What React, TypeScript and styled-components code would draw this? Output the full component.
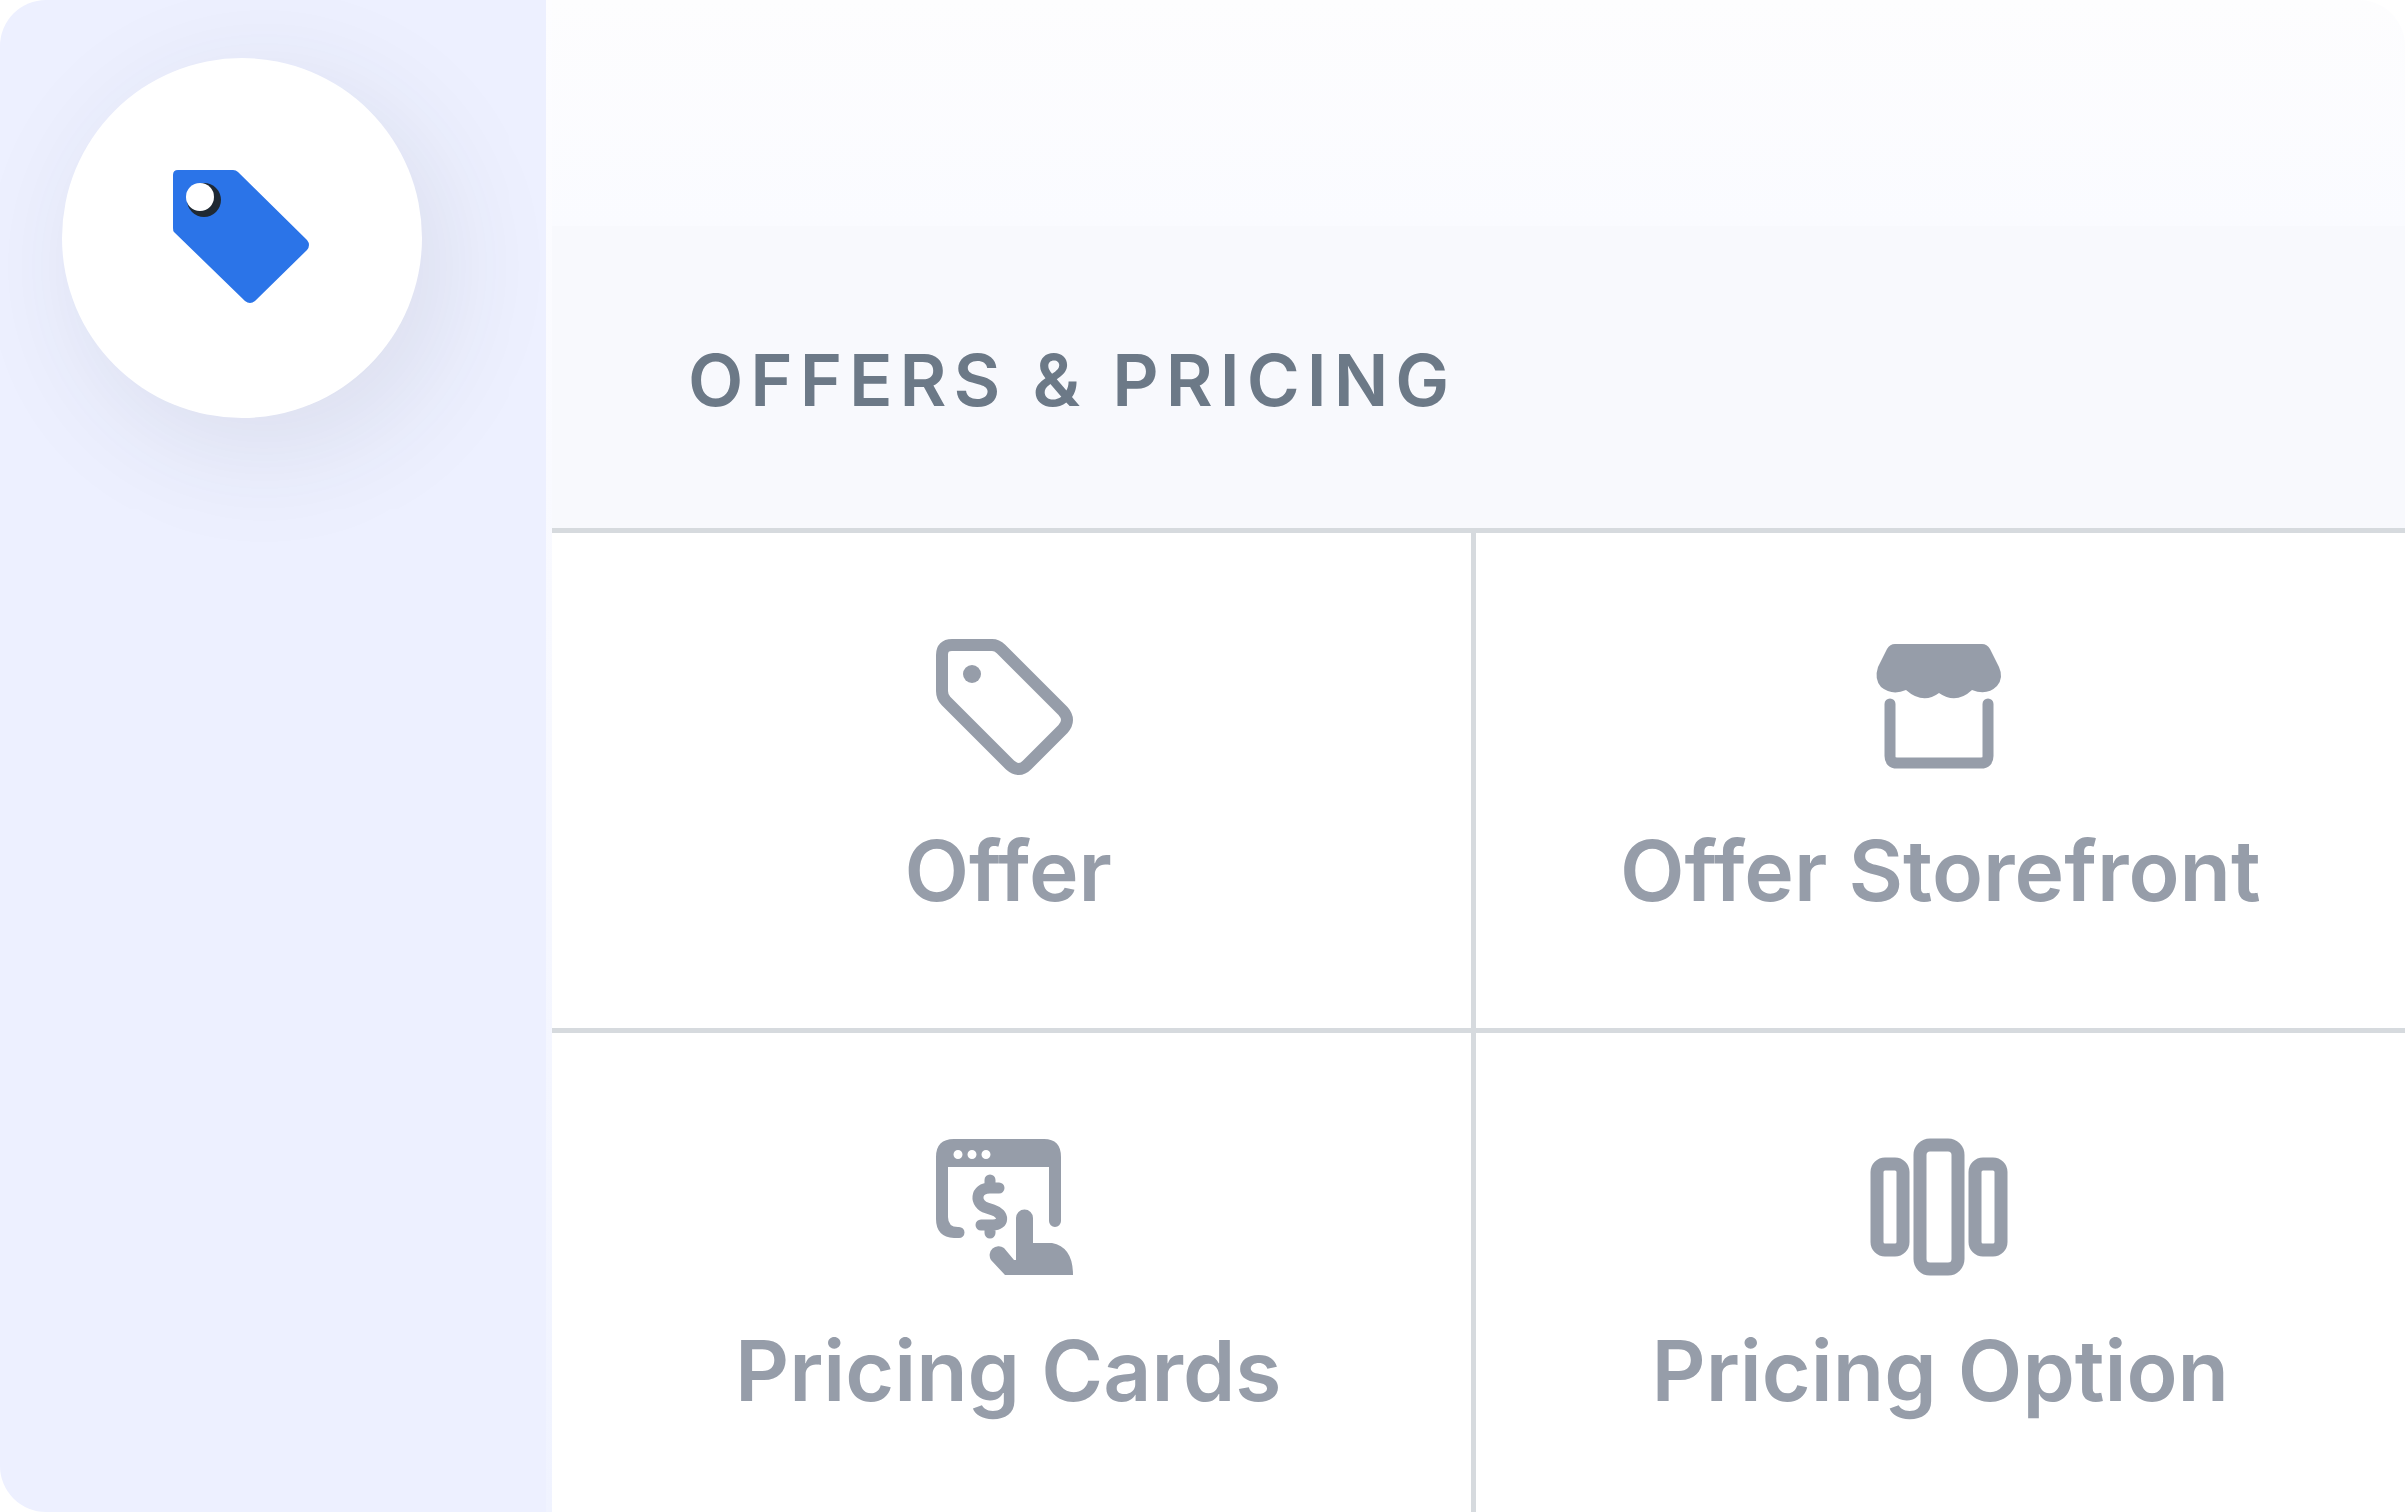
import React from "react";
import styled, { createGlobalStyle } from "styled-components";

const GlobalStyle = createGlobalStyle`
  *, *::before, *::after { box-sizing: border-box; }
  body {
    margin: 0;
    background: #ffffff;
    font-family: Inter, "Liberation Sans", sans-serif;
  }
`;

const Card = styled.main`
  display: flex;
  height: 100vh;
  overflow: hidden;
  border-radius: 46px;
  background: #ffffff;
`;

const Sidebar = styled.nav`
  flex: none;
  width: 552px;
  margin-right: -6px;
  padding: 58px 62px;
  border-right: 6px solid;
  border-image: linear-gradient(#fdfdff, #f8f9ff 40%, #f0f3ff) 1;
  background: #edf0ff;
  z-index: 1;
`;

const CategoryButton = styled.button`
  display: grid;
  place-items: center;
  width: 360px;
  height: 360px;
  padding: 0;
  border: 0;
  border-radius: 50%;
  background: #ffffff;
  box-shadow: 22px 28px 120px rgba(50, 60, 70, 0.1);
  cursor: pointer;
`;

const Panel = styled.section`
  flex: 1;
  min-width: 0;
`;

const TopFade = styled.div`
  height: 226px;
  background: linear-gradient(#fdfdfe, #fafbff);
`;

const Header = styled.header`
  display: flex;
  height: 307px;
  padding: 109px 142px 0;
  border-bottom: 5px solid #d6dade;
  background: #f8f9fd;
`;

const Title = styled.h2`
  margin: 0;
  color: #6c7987;
  font-size: 72px;
  font-weight: 600;
  line-height: 90px;
  letter-spacing: 7px;
  white-space: nowrap;
`;

const Grid = styled.div`
  display: grid;
  grid-template-columns: repeat(2, 1fr);
  grid-auto-rows: 500px;
`;

const Tile = styled.button`
  display: flex;
  flex-direction: column;
  align-items: center;
  gap: 42px;
  padding: 100px 0 0;
  border: 0 solid #d6dade;
  border-bottom-width: 5px;
  background: #ffffff;
  color: #969da9;
  font-family: inherit;
  cursor: pointer;

  &:nth-child(odd) {
    border-right-width: 5px;
  }
`;

const Label = styled.span`
  font-size: 84px;
  font-weight: 600;
  line-height: 104px;
  white-space: nowrap;
`;

const TagFilled = () => (
  <svg width="144" height="144" viewBox="0 0 144 144" aria-hidden="true">
    <path
      d="M8 4H63Q66 4 68 6L137 74Q141 79 137 84L85 135Q80 139 75 135L4 66Q3 65 3 62V9Q3 4 8 4Z"
      fill="#2b74e8"
    />
    <circle cx="34" cy="34" r="17" fill="#1f2933" />
    <circle cx="30" cy="31" r="14" fill="#ffffff" />
  </svg>
);

const TagOutline = () => (
  <svg width="144" height="144" viewBox="4 0 144 144" aria-hidden="true">
    <path
      d="M20 12H60Q65 12 69 16L131 78Q139 87 131 96L95 132Q87 140 78 132L14 68Q10 64 10 58V22Q10 12 20 12Z"
      fill="none"
      stroke="currentColor"
      strokeWidth="12"
      strokeLinejoin="round"
    />
    <circle cx="40" cy="41" r="9" fill="currentColor" />
  </svg>
);

const Storefront = () => (
  <svg width="144" height="144" viewBox="1 0 144 144" aria-hidden="true">
    <path
      d="M28 11H115Q120 11 123 16L132 34Q137 45 130 53Q120 63 105 57Q89 72 72 60Q56 72 39 57Q25 63 14 54Q7 46 11 34L20 16Q23 11 28 11Z"
      fill="currentColor"
    />
    <path
      d="M23 71V123Q23 130 30 130H114Q121 130 121 123V71"
      fill="none"
      stroke="currentColor"
      strokeWidth="11"
      strokeLinecap="round"
    />
  </svg>
);

const PricingCards = () => (
  <svg width="144" height="144" viewBox="4 0 144 144" aria-hidden="true">
    <path
      fillRule="evenodd"
      d="M22 6H112Q129 6 129 24V88A6 6 0 0 1 117 88V34H16V84Q16 94 26 94H27A5 5 0 0 1 27 105H22Q4 104 4 86V24Q4 6 22 6ZM26 17a4.500 4.500 0 1 0 0 9a4.500 4.500 0 1 0 0-9ZM40 17a4.500 4.500 0 1 0 0 9a4.500 4.500 0 1 0 0-9ZM54 17a4.500 4.500 0 1 0 0 9a4.500 4.500 0 1 0 0-9Z"
      fill="currentColor"
    />
    <path
      d="M67 55H58C43 55 42 71 55 75L61 77C73 81 72 92 61 92H49M58 47V54M58 93V100"
      fill="none"
      stroke="currentColor"
      strokeWidth="11"
      strokeLinecap="round"
    />
    <path
      d="M84 127V85A8 8 0 0 1 101 85V110H120Q141 114 141 142H73L59 127A9 9 0 0 1 72 115L82 127Z"
      fill="currentColor"
    />
  </svg>
);

const PricingOption = () => (
  <svg width="144" height="144" viewBox="1 0 144 144" aria-hidden="true">
    <g fill="none" stroke="currentColor" strokeWidth="13">
      <rect x="10" y="31" width="26" height="86" rx="8" />
      <rect x="53" y="12" width="38" height="124" rx="10" />
      <rect x="108" y="31" width="26" height="86" rx="8" />
    </g>
  </svg>
);

const tiles = [
  { label: "Offer", Icon: TagOutline },
  { label: "Offer Storefront", Icon: Storefront },
  { label: "Pricing Cards", Icon: PricingCards },
  { label: "Pricing Option", Icon: PricingOption },
];

export default function App() {
  return (
    <>
      <GlobalStyle />
      <Card>
        <Sidebar>
          <CategoryButton type="button" aria-label="Offers & Pricing">
            <TagFilled />
          </CategoryButton>
        </Sidebar>
        <Panel>
          <TopFade />
          <Header>
            <Title>OFFERS &amp; PRICING</Title>
          </Header>
          <Grid>
            {tiles.map(({ label, Icon }) => (
              <Tile type="button" key={label}>
                <Icon />
                <Label>{label}</Label>
              </Tile>
            ))}
          </Grid>
        </Panel>
      </Card>
    </>
  );
}
